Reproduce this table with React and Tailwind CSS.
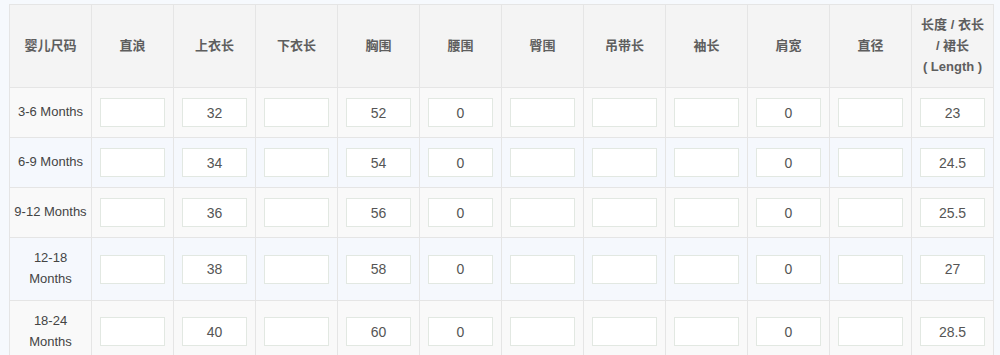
import React from "react";

const headers = [
  "婴儿尺码",
  "直浪",
  "上衣长",
  "下衣长",
  "胸围",
  "腰围",
  "臀围",
  "吊带长",
  "袖长",
  "肩宽",
  "直径",
];

const rows = [
  { size: ["3-6 Months"], vals: ["", "32", "", "52", "0", "", "", "", "0", "", "23"] },
  { size: ["6-9 Months"], vals: ["", "34", "", "54", "0", "", "", "", "0", "", "24.5"] },
  { size: ["9-12 Months"], vals: ["", "36", "", "56", "0", "", "", "", "0", "", "25.5"] },
  { size: ["12-18", "Months"], vals: ["", "38", "", "58", "0", "", "", "", "0", "", "27"] },
  { size: ["18-24", "Months"], vals: ["", "40", "", "60", "0", "", "", "", "0", "", "28.5"] },
];

export default function App() {
  return (
    <div
      className="w-[1000px] h-[355px] overflow-hidden bg-[#f6f9fd] pl-[9px] pt-[4px]"
      style={{ fontFamily: '"Liberation Sans", Arial, "Noto Sans CJK SC", sans-serif' }}
    >
      <table className="table-fixed border-collapse w-[985px] text-[13px] leading-[1.6]">
        <thead>
          <tr className="bg-[#f4f4f4]">
            {headers.map((h) => (
              <th
                key={h}
                className="border border-[#e5e5e5] px-[8px] py-[10px] text-center align-middle font-bold text-[#5e5e5e]"
              >
                {h}
              </th>
            ))}
            <th className="border border-[#e5e5e5] px-[4px] py-[10px] text-center align-middle font-bold text-[#5e5e5e] whitespace-nowrap">
              长度 / 衣长
              <br />/ 裙长
              <br />( Length )
            </th>
          </tr>
        </thead>
        <tbody>
          {rows.map((r, i) => (
            <tr key={i} className={i % 2 === 0 ? "bg-[#f9f9f9]" : "bg-[#f5f8fd]"}>
              <td className="border border-[#e5e5e5] px-[4px] py-[10px] text-center align-middle text-[#444]">
                {r.size.map((s, k) => (
                  <div key={k}>{s}</div>
                ))}
              </td>
              {r.vals.map((v, j) => (
                <td
                  key={j}
                  className="border border-[#e5e5e5] px-[8px] py-[10px] text-center align-middle"
                >
                  <div className="h-[29px] w-full bg-white border border-[#e2e8e2] flex items-center justify-center text-[#555] text-[14px]">
                    {v}
                  </div>
                </td>
              ))}
            </tr>
          ))}
        </tbody>
      </table>
    </div>
  );
}
